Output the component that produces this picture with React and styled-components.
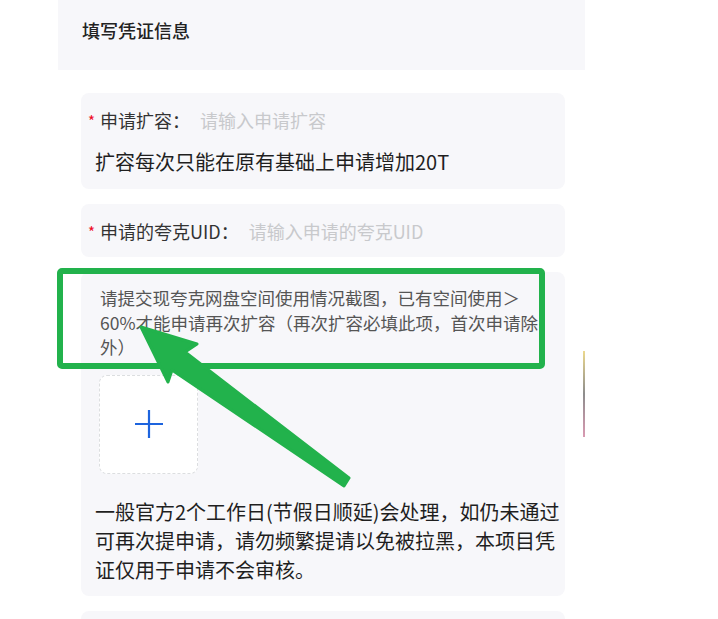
import React from 'react'
import styled, { createGlobalStyle } from 'styled-components';

const Global = createGlobalStyle`
    html, body {
        margin: 0;
        padding: 0;
        background: #fff;
    }
    body {
        font-family: "Noto Sans CJK SC", "Noto Sans", sans-serif;
        color: #222;
    }
`;

const Page = styled.div`
    position: relative;
    width: 718px;
    height: 619px;
    overflow: hidden;
`;

const Panel = styled.div`
    margin-left: 58px;
    width: 527px;
`;

const Header = styled.div`
    height: 70px;
    background: #f7f7fa;
    padding: 0 24px;
    display: flex;
    align-items: center;
    box-sizing: border-box;
    padding-bottom: 10px;
    font-size: 18px;
    font-weight: 500;
    color: #222;
`;

const Form = styled.div`
    display: flex;
    flex-direction: column;
    gap: 15px;
    padding: 23px 20px 0 23px;
`;

const Card = styled.div`
    background: #f7f7fa;
    border-radius: 8px;
    box-sizing: border-box;
    padding: ${({pad}) => pad || '15px 8px 14px 7px'};
    min-height: ${({h}) => h || 'auto'};
`;

const Row = styled.div`
    display: flex;
    align-items: center;
    height: 24px;
    font-size: 18px;
    line-height: 24px;
`;

const Star = styled.span`
    color: #ee0a24;
    font-size: 15px;
    width: 12px;
    align-self: flex-start;
    line-height: 22px;
    padding-top: 2px;
`;

const Label = styled.span`
    color: #333;
    margin-right: 10px;
`;

const Placeholder = styled.span`
    color: #c8c9cc;
`;

const Hint = styled.div`
    margin: 17px 0 0 7px;
    font-size: 20px;
    line-height: 26px;
    color: #1f1f1f;
`;

const Note = styled.div`
    width: 446px;
    margin-left: 5px;
    font-size: 17.5px;
    line-height: 24.5px;
    color: #555;
`;

const Upload = styled.div`
    width: 99px;
    height: 99px;
    margin: 15px 0 0 4px;
    box-sizing: border-box;
    border: 1px dashed #dcdee0;
    border-radius: 8px;
    background: #fff;
    display: flex;
    align-items: center;
    justify-content: center;
`;

const Desc = styled.div`
    margin-top: 23px;
    width: 470px;
    font-size: 20px;
    line-height: 29px;
    color: #1f1f1f;
`;

const Frame = styled.div`
    position: absolute;
    left: 57px;
    top: 268px;
    width: 488px;
    height: 101px;
    box-sizing: border-box;
    border: 6px solid #22b24c;
    border-radius: 5px;
    pointer-events: none;
`;

const Arrow = styled.svg`
    position: absolute;
    left: 0;
    top: 0;
    pointer-events: none;
`;

const Streak = styled.div`
    position: absolute;
    left: 583px;
    top: 351px;
    width: 2px;
    height: 86px;
    background: linear-gradient(#ecd98e, #8d8d8d 50%, #d99ab2);
`;

const Field = ({label, placeholder}) => (
    <Row>
        <Star>*</Star>
        <Label>{label}</Label>
        <Placeholder>{placeholder}</Placeholder>
    </Row>
);

const App = () => {
    return (
        <Page>
            <Global />
            <Panel>
                <Header>填写凭证信息</Header>
                <Form>
                    <Card>
                        <Field label="申请扩容：" placeholder="请输入申请扩容" />
                        <Hint>扩容每次只能在原有基础上申请增加20T</Hint>
                    </Card>
                    <Card pad="15px 8px 14px 7px">
                        <Field label="申请的夸克UID：" placeholder="请输入申请的夸克UID" />
                    </Card>
                    <Card pad="14px 6px 12px 14px">
                        <Note>请提交现夸克网盘空间使用情况截图，已有空间使用＞60%才能申请再次扩容（再次扩容必填此项，首次申请除外）</Note>
                        <Upload>
                            <svg width="30" height="30" viewBox="0 0 30 30">
                                <path d="M15 1v28M1 15h28" stroke="#1d64de" strokeWidth="2.2" />
                            </svg>
                        </Upload>
                        <Desc>一般官方2个工作日(节假日顺延)会处理，如仍未通过可再次提申请，请勿频繁提请以免被拉黑，本项目凭证仅用于申请不会审核。</Desc>
                    </Card>
                    <Card h="40px" />
                </Form>
            </Panel>
            <Frame />
            <Streak />
            <Arrow width="718" height="619" viewBox="0 0 718 619">
                <polygon
                    points="141,327 197,344 185,352 349,478 344,486 172,370 168,382"
                    fill="#22b24c"
                    stroke="#22b24c"
                    strokeWidth="3"
                    strokeLinejoin="round"
                />
            </Arrow>
        </Page>
    );
};

export default App;
